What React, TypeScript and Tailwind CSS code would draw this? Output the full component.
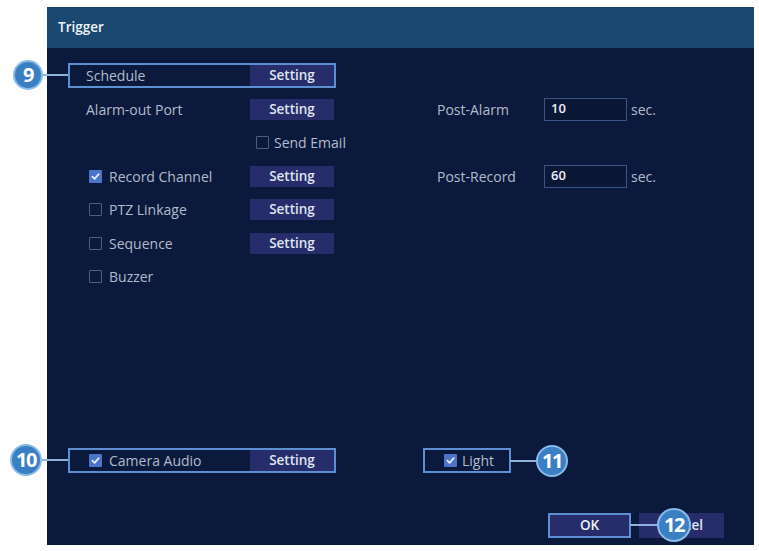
import type { ReactNode } from "react";

const font = { fontFamily: '"Open Sans", "Noto Sans", Arial, sans-serif' };

function Check({ on = false }: { on?: boolean }) {
  if (on) {
    return (
      <span className="flex h-[13px] w-[13px] shrink-0 items-center justify-center rounded-[1px] bg-[#4d74c9]">
        <svg width="9" height="9" viewBox="0 0 10 10" fill="none">
          <path d="M1.5 5.2 4 7.6 8.6 2.4" stroke="#e8eefb" strokeWidth="1.8" strokeLinecap="round" strokeLinejoin="round" />
        </svg>
      </span>
    );
  }
  return <span className="h-[13px] w-[13px] shrink-0 rounded-[1px] border border-[#4f5d7e]" />;
}

function SettingBtn() {
  return (
    <div className="flex h-full w-[84px] items-center justify-center bg-[#272d6a] text-[13.5px] font-semibold text-[#dfe4ef]">
      Setting
    </div>
  );
}

// a left-column row; `boxed` draws the highlight frame
function Row({
  children,
  setting = true,
  boxed = false,
}: {
  children: ReactNode;
  setting?: boolean;
  boxed?: boolean;
}) {
  return (
    <div
      className={`flex h-[25px] w-[268px] items-stretch border-2 ${
        boxed ? "border-[#5d8fd2]" : "border-transparent"
      }`}
    >
      <div className="flex flex-1 items-center whitespace-nowrap text-[14px] text-[#b3bacb]">{children}</div>
      {setting && <SettingBtn />}
    </div>
  );
}

function Field({ label, value }: { label: string; value: string }) {
  return (
    <div className="flex h-[25px] items-center text-[14px] text-[#b3bacb]">
      <span className="w-[107px]">{label}</span>
      <div className="flex h-[23px] w-[83px] items-center border border-[#3b5488] bg-[#0a1836] pl-[6px] text-[13px] font-semibold text-[#eef1f7]">
        {value}
      </div>
      <span className="ml-[4px]">sec.</span>
    </div>
  );
}

function Callout({ n, className }: { n: string; className: string }) {
  return (
    <div
      className={`absolute flex items-center justify-center rounded-full border-2 border-[#86bbea] bg-[#3b7fc3] text-[20px] font-bold leading-none tracking-[-1.5px] text-white ${className}`}
    >
      {n}
    </div>
  );
}

export default function App() {
  return (
    <div className="relative h-[551px] w-[759px] overflow-hidden bg-white" style={font}>
      <div className="ml-[47px] mt-[7px] flex h-[538px] w-[707px] flex-col bg-[#0b1a3c]">
        {/* title bar */}
        <div className="flex h-[41px] items-center bg-[#1a4870] pl-[11px] text-[13.5px] font-semibold text-[#eef2f8]">
          Trigger
        </div>

        <div className="flex flex-1 flex-col pl-[21px] pt-[15px]">
          <div className="flex">
            <div className="flex flex-col gap-[8.5px]">
              <Row boxed>
                <span className="pl-[16px]">Schedule</span>
              </Row>
              <Row>
                <span className="pl-[16px]">Alarm-out Port</span>
              </Row>
              <Row setting={false}>
                <span className="flex items-center gap-[5px] pl-[186px]">
                  <Check />
                  Send Email
                </span>
              </Row>
              <Row>
                <span className="flex items-center gap-[7px] pl-[19px]">
                  <Check on />
                  Record Channel
                </span>
              </Row>
              <Row>
                <span className="flex items-center gap-[7px] pl-[19px]">
                  <Check />
                  PTZ Linkage
                </span>
              </Row>
              <Row>
                <span className="flex items-center gap-[7px] pl-[19px]">
                  <Check />
                  Sequence
                </span>
              </Row>
              <Row setting={false}>
                <span className="flex items-center gap-[7px] pl-[19px]">
                  <Check />
                  Buzzer
                </span>
              </Row>
            </div>

            <div className="ml-[101px] flex flex-col gap-[42px] pt-[33.5px]">
              <Field label="Post-Alarm" value="10" />
              <Field label="Post-Record" value="60" />
            </div>
          </div>

          <div className="mt-[159px] flex items-center">
            <Row boxed>
              <span className="flex items-center gap-[7px] pl-[19px]">
                <Check on />
                Camera Audio
              </span>
            </Row>
            <div className="ml-[87px] flex h-[25px] w-[88px] items-center gap-[5px] border-2 border-[#5d8fd2] pl-[19px] text-[14px] text-[#b3bacb]">
              <Check on />
              Light
            </div>
          </div>

          <div className="mt-[40px] flex gap-[8px] pl-[480px]">
            <div className="flex h-[25px] w-[83px] items-center justify-center border-2 border-[#5d8fd2] bg-[#272d6a] text-[13.5px] font-semibold text-[#eef1f7]">
              OK
            </div>
            <div className="flex h-[25px] w-[85px] items-center justify-center bg-[#272d6a] text-[13.5px] font-semibold text-[#dfe4ef]">
              Cancel
            </div>
          </div>
        </div>
      </div>

      {/* annotation leaders */}
      <div className="absolute left-[40px] top-[74px] h-[2px] w-[28px] bg-[#8fb3dc]" />
      <div className="absolute left-[40px] top-[459px] h-[2px] w-[28px] bg-[#8fb3dc]" />
      <div className="absolute left-[510px] top-[460px] h-[2px] w-[28px] bg-[#8fb3dc]" />
      <div className="absolute left-[630px] top-[524px] h-[2px] w-[30px] bg-[#8fb3dc]" />

      <Callout n="9" className="left-[13px] top-[60px] h-[30px] w-[30px]" />
      <Callout n="10" className="left-[10px] top-[444px] h-[32px] w-[32px]" />
      <Callout n="11" className="left-[536px] top-[445px] h-[32px] w-[32px]" />
      <Callout n="12" className="left-[657px] top-[508px] h-[34px] w-[34px]" />
    </div>
  );
}
